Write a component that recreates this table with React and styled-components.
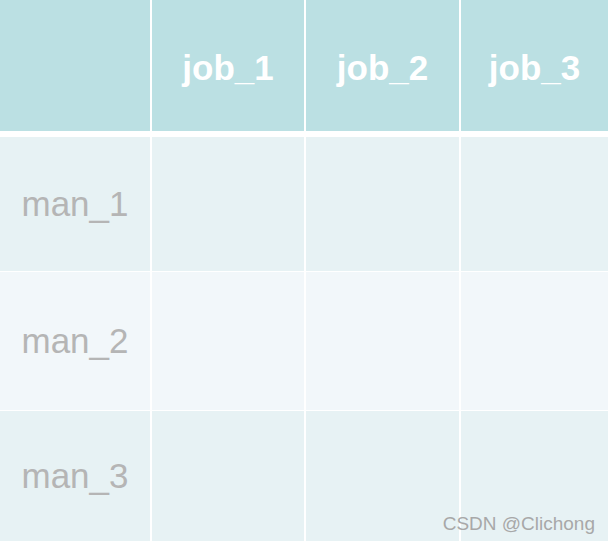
import React from 'react'
import styled, { createGlobalStyle } from 'styled-components'

const GlobalStyle = createGlobalStyle`
  body {
    margin: 0;
    background: #fff;
    font-family: "Liberation Sans", Arial, sans-serif;
  }
`

const Page = styled.div`
  position: relative;
  width: 608px;
  height: 541px;
  overflow: hidden;
  background: #fff;
`

const Table = styled.div`
  display: flex;
  flex-direction: column;
  gap: 1px;
`

const Row = styled.div`
  display: grid;
  grid-template-columns: 150px 152px 153px 147px;
  column-gap: 2px;
  height: ${p => p.h}px;
  border-bottom: ${p => (p.head ? '5px solid #fff' : 'none')};
`

const HeadCell = styled.div`
  background: #bbe0e3;
  color: #fff;
  font-size: 35px;
  font-weight: bold;
  display: flex;
  align-items: center;
  justify-content: center;
  padding-top: 4px;
  box-sizing: border-box;
`

const Cell = styled.div`
  background: ${p => (p.alt ? '#f2f7fa' : '#e7f2f4')};
  color: #b5b5b5;
  font-size: 35px;
  display: flex;
  align-items: center;
  justify-content: center;
`

const Watermark = styled.div`
  position: absolute;
  right: 13px;
  bottom: 6px;
  font-size: 19px;
  color: #a8a8a8;
`

const jobs = ['job_1', 'job_2', 'job_3']
const rows = [
  { name: 'man_1', h: 134 },
  { name: 'man_2', h: 138, alt: true },
  { name: 'man_3', h: 130 },
]

export default function App() {
  return (
    <Page>
      <GlobalStyle />
      <Table>
        <Row h={131} head>
          <HeadCell />
          {jobs.map(j => <HeadCell key={j}>{j}</HeadCell>)}
        </Row>
        {rows.map(r => (
          <Row key={r.name} h={r.h}>
            <Cell alt={r.alt}>{r.name}</Cell>
            {jobs.map(j => <Cell key={j} alt={r.alt} />)}
          </Row>
        ))}
      </Table>
      <Watermark>CSDN @Clichong</Watermark>
    </Page>
  )
}
